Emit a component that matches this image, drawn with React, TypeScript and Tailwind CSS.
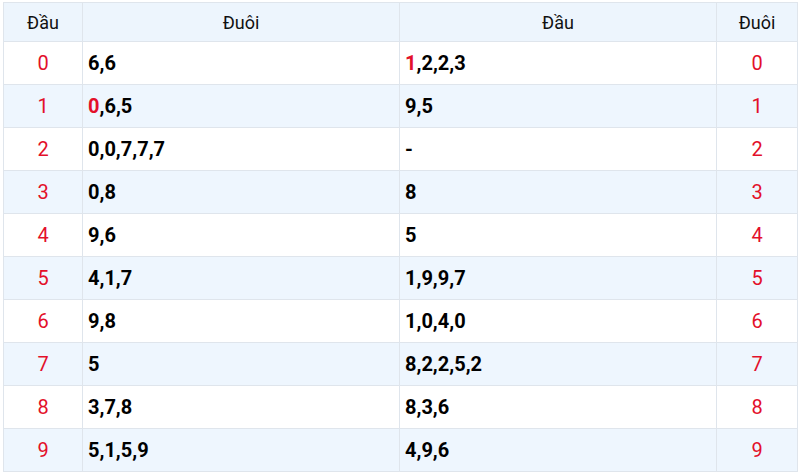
import React from 'react';

interface Row {
  idx: number;
  tail: string;
  head: string;
  redTail?: boolean;
  redHead?: boolean;
}

const rows: Row[] = [
  { idx: 0, tail: '6,6', head: '1,2,2,3', redHead: true },
  { idx: 1, tail: '0,6,5', head: '9,5', redTail: true },
  { idx: 2, tail: '0,0,7,7,7', head: '-' },
  { idx: 3, tail: '0,8', head: '8' },
  { idx: 4, tail: '9,6', head: '5' },
  { idx: 5, tail: '4,1,7', head: '1,9,9,7' },
  { idx: 6, tail: '9,8', head: '1,0,4,0' },
  { idx: 7, tail: '5', head: '8,2,2,5,2' },
  { idx: 8, tail: '3,7,8', head: '8,3,6' },
  { idx: 9, tail: '5,1,5,9', head: '4,9,6' },
];

// first digit in red when flagged
function Numbers({ value, red }: { value: string; red?: boolean }) {
  if (red) {
    return (
      <>
        <span className="text-[#e3102a]">{value[0]}</span>
        {value.slice(1)}
      </>
    );
  }
  return <>{value}</>;
}

export default function App() {
  return (
    <div className="w-[800px] h-[474px] bg-white px-[3px] pt-[2px]" style={{ fontFamily: 'Roboto, "Noto Sans", sans-serif' }}>
      <table className="w-[794px] border-collapse table-fixed">
        <colgroup>
          <col className="w-[79px]" />
          <col className="w-[317px]" />
          <col className="w-[317px]" />
          <col className="w-[81px]" />
        </colgroup>
        <thead>
          <tr className="bg-[#edf5fd] h-[39px]">
            <th className="border border-[#dfe5ec] font-normal text-[18px] text-[#111]">Đầu</th>
            <th className="border border-[#dfe5ec] font-normal text-[18px] text-[#111]">Đuôi</th>
            <th className="border border-[#dfe5ec] font-normal text-[18px] text-[#111]">Đầu</th>
            <th className="border border-[#dfe5ec] font-normal text-[18px] text-[#111]">Đuôi</th>
          </tr>
        </thead>
        <tbody>
          {rows.map((r) => (
            <tr key={r.idx} className={`h-[43px] ${r.idx % 2 === 1 ? 'bg-[#eef6fe]' : 'bg-white'}`}>
              <td className="border border-[#dfe5ec] text-center text-[20px] text-[#e3102a]">{r.idx}</td>
              <td className="border border-[#dfe5ec] pl-[5px] text-[20px] font-bold text-black">
                <Numbers value={r.tail} red={r.redTail} />
              </td>
              <td className="border border-[#dfe5ec] pl-[5px] text-[20px] font-bold text-black">
                <Numbers value={r.head} red={r.redHead} />
              </td>
              <td className="border border-[#dfe5ec] text-center text-[20px] text-[#e3102a]">{r.idx}</td>
            </tr>
          ))}
        </tbody>
      </table>
    </div>
  );
}
